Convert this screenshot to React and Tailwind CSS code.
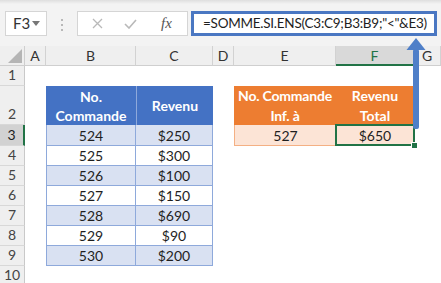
import React from 'react'

const COLS = ['A', 'B', 'C', 'D', 'E', 'F', 'G']

const COMMANDES = [
  ['524', '$250'],
  ['525', '$300'],
  ['526', '$100'],
  ['527', '$150'],
  ['528', '$690'],
  ['529', '$90'],
  ['530', '$200']
]

const blueBorder = 'border-[#8ea9db]'

function RowHead ({ label, active }) {
  return (
    <div
      className={`flex items-end justify-center border-b border-[#d8d8d8] pb-px text-[14px] leading-[18px] ${
        active
          ? 'border-r-2 border-r-[#217346] bg-[#d2d2d2] text-[#1e1e1e]'
          : 'border-r border-r-[#c9c9c9] bg-[#efefef] text-[#444]'
      }`}
    >
      {label}
    </div>
  )
}

function ColHead ({ label, active }) {
  return (
    <div
      className={`flex items-center justify-center border-r border-[#d2d2d2] text-[14px] ${
        active
          ? 'border-b-2 border-b-[#217346] bg-[#d9d9d9] text-[#217346]'
          : 'border-b border-b-[#cfcfcf] bg-[#efefef] text-[#333]'
      }`}
    >
      {label}
    </div>
  )
}

const Empty = () => <div className="bg-white" />

export default function App () {
  return (
    <div className="relative h-[283px] w-[441px] overflow-hidden bg-white font-[Lato,'Open_Sans',sans-serif] text-[#1e1e1e]">
      {/* barre de formule */}
      <div className="h-[46px] bg-[#f3f3f3]">
        <div className="h-[4px] bg-gradient-to-b from-[#dedede] to-[#f3f3f3]" />
        <div className="flex items-start pl-[5px] pt-[7px]">
          <div className="flex h-[25px] w-[42px] items-center justify-between border border-[#d5d5d5] bg-white pl-[7px] pr-[6px] text-[15px] text-[#333]">
            <span>F3</span>
            <svg width="8" height="5" viewBox="0 0 8 5">
              <path d="M0 0h8L4 5z" fill="#777" />
            </svg>
          </div>
          <div className="flex w-[30px] flex-col items-center gap-[3px] pt-[8px]">
            <span className="h-[2px] w-[2px] bg-[#b8b8b8]" />
            <span className="h-[2px] w-[2px] bg-[#b8b8b8]" />
            <span className="h-[2px] w-[2px] bg-[#b8b8b8]" />
          </div>
          <div className="flex h-[25px] w-[111px] items-center border border-[#d5d5d5] bg-white pl-[14px]">
            <svg width="11" height="11" viewBox="0 0 11 11" className="mr-[21px]">
              <path d="M1 1l9 9M10 1l-9 9" stroke="#b9b9b9" strokeWidth="1.3" />
            </svg>
            <svg width="13" height="10" viewBox="0 0 13 10" className="mr-[24px]">
              <path d="M1 5l4 4 7-8" fill="none" stroke="#b9b9b9" strokeWidth="1.6" />
            </svg>
            <span className="font-['Liberation_Serif',serif] text-[15px] italic text-[#555]">fx</span>
          </div>
          <div className="ml-[3px] flex h-[25px] w-[246px] items-center overflow-hidden whitespace-nowrap border-[3px] border-[#4a77c2] bg-white pl-[9px] text-[13.5px] tracking-[-0.25px] text-[#1e1e1e]">
            =SOMME.SI.ENS(C3:C9;B3:B9;"&lt;"&amp;E3)
          </div>
        </div>
      </div>

      {/* feuille */}
      <div className="grid grid-cols-[25px_21px_90px_77px_21px_102px_78px_27px] grid-rows-[20px_20px_39px_21px_20px_20px_20px_20px_20px_20px_20px] whitespace-nowrap text-[14px]">
        <div className="flex items-end justify-end border-b border-r border-[#cfcfcf] bg-[#efefef] p-[2px]">
          <svg width="14" height="14" viewBox="0 0 14 14">
            <path d="M14 0v14H0z" fill="#b5b5b5" />
          </svg>
        </div>
        {COLS.map(col => (
          <ColHead key={col} label={col} active={col === 'F'} />
        ))}

        <RowHead label="1" />
        {COLS.map(col => <Empty key={col} />)}

        <RowHead label="2" />
        <Empty />
        <div className="flex flex-col items-center justify-center bg-[#4472c4] text-center font-bold leading-[19px] text-white">
          <span>No.</span>
          <span>Commande</span>
        </div>
        <div className={`flex items-center justify-center border-l ${blueBorder} bg-[#4472c4] font-bold text-white`}>
          Revenu
        </div>
        <Empty />
        <div className="flex flex-col items-center justify-center bg-[#ed7d31] font-bold leading-[20px] tracking-[-0.2px] text-white">
          <span>No. Commande</span>
          <span>Inf. à</span>
        </div>
        <div className="flex flex-col items-center justify-center bg-[#ed7d31] font-bold leading-[20px] text-white">
          <span>Revenu</span>
          <span>Total</span>
        </div>
        <Empty />

        {COMMANDES.map(([num, revenu], i) => {
          const row = i + 3
          const fill = i % 2 === 0 ? 'bg-[#d9e1f2]' : 'bg-white'
          return (
            <React.Fragment key={num}>
              <RowHead label={String(row)} active={row === 3} />
              <Empty />
              <div className={`flex items-center justify-center border-b border-l border-r ${blueBorder} ${fill}`}>
                {num}
              </div>
              <div className={`flex items-center justify-center border-b border-r ${blueBorder} ${fill}`}>
                {revenu}
              </div>
              <Empty />
              {row === 3
                ? (
                  <>
                    <div className="flex items-center justify-center border-b border-l border-[#f4b084] bg-[#fce4d6]">
                      527
                    </div>
                    <div className="relative flex items-center justify-center border-b border-[#f4b084] bg-[#fce4d6]">
                      $650
                      <div className="absolute -bottom-px -left-px -right-px -top-px border-2 border-[#217346]" />
                      <div className="absolute -bottom-[4px] -right-[4px] h-[7px] w-[7px] border border-white bg-[#217346]" />
                    </div>
                  </>
                  )
                : (
                  <>
                    <Empty />
                    <Empty />
                  </>
                  )}
              <Empty />
            </React.Fragment>
          )
        })}

        <RowHead label="10" />
        {COLS.map(col => <Empty key={col} />)}
      </div>

      {/* flèche */}
      <svg className="absolute left-[405px] top-[37px]" width="22" height="95" viewBox="0 0 22 95">
        <path d="M11 1L1.5 13h19z" fill="#4f7fc8" />
        <rect x="8" y="12" width="6" height="80" rx="2" fill="#4f7fc8" />
      </svg>
    </div>
  )
}
